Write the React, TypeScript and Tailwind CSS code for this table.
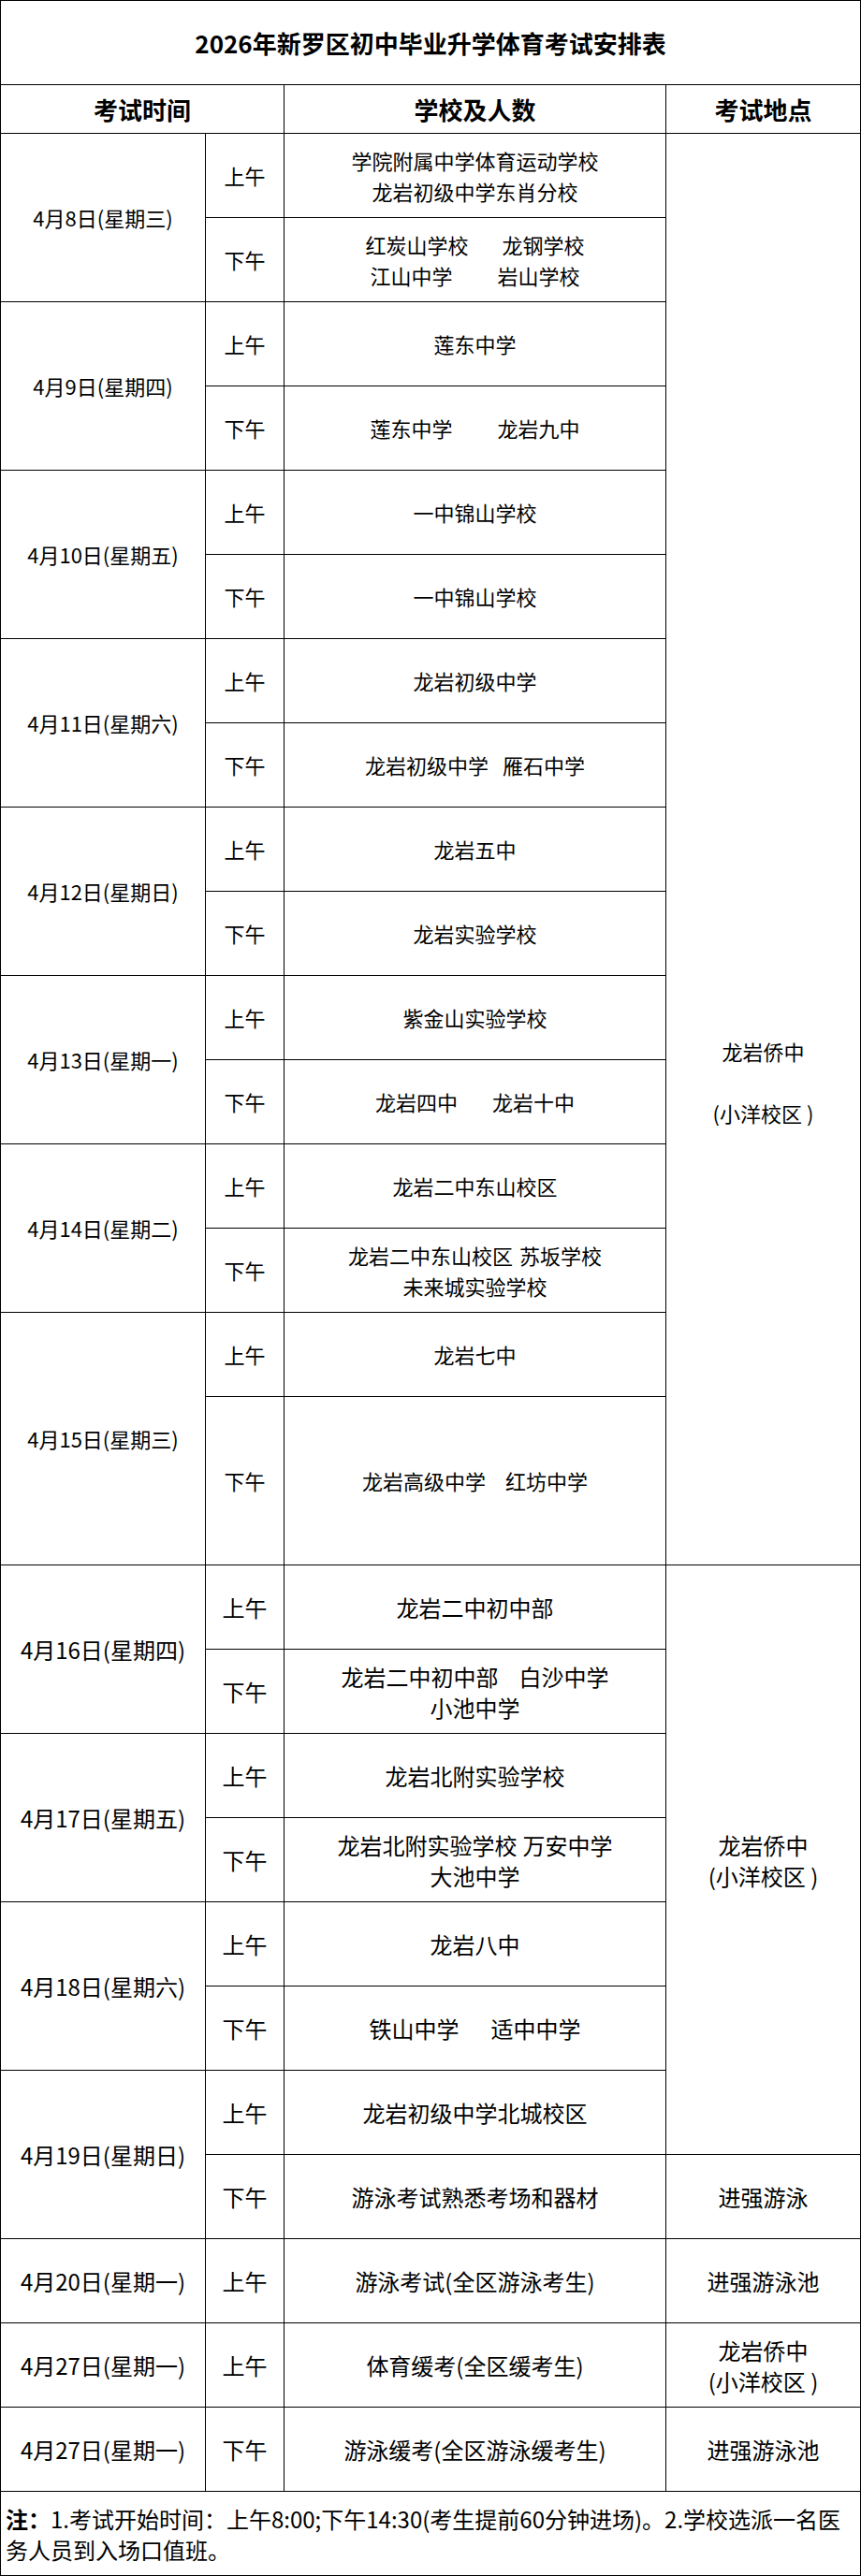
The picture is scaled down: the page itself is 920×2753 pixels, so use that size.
import React from "react";

type Line = { segs: string[]; gap?: string };
type Half = { period: string; lines: Line[] };
type Day = { date: string; am: Half; pm: Half };

const L = (segs: string[], gap = "gap-0"): Line => ({ segs, gap });

const upper: Day[] = [
  {
    date: "4月8日(星期三)",
    am: { period: "上午", lines: [L(["学院附属中学体育运动学校"]), L(["龙岩初级中学东肖分校"])] },
    pm: { period: "下午", lines: [L(["红炭山学校", "龙钢学校"], "gap-[36px]"), L(["江山中学", "岩山学校"], "gap-[48px]")] },
  },
  {
    date: "4月9日(星期四)",
    am: { period: "上午", lines: [L(["莲东中学"])] },
    pm: { period: "下午", lines: [L(["莲东中学", "龙岩九中"], "gap-[48px]")] },
  },
  {
    date: "4月10日(星期五)",
    am: { period: "上午", lines: [L(["一中锦山学校"])] },
    pm: { period: "下午", lines: [L(["一中锦山学校"])] },
  },
  {
    date: "4月11日(星期六)",
    am: { period: "上午", lines: [L(["龙岩初级中学"])] },
    pm: { period: "下午", lines: [L(["龙岩初级中学", "雁石中学"], "gap-[15px]")] },
  },
  {
    date: "4月12日(星期日)",
    am: { period: "上午", lines: [L(["龙岩五中"])] },
    pm: { period: "下午", lines: [L(["龙岩实验学校"])] },
  },
  {
    date: "4月13日(星期一)",
    am: { period: "上午", lines: [L(["紫金山实验学校"])] },
    pm: { period: "下午", lines: [L(["龙岩四中", "龙岩十中"], "gap-[37px]")] },
  },
  {
    date: "4月14日(星期二)",
    am: { period: "上午", lines: [L(["龙岩二中东山校区"])] },
    pm: { period: "下午", lines: [L(["龙岩二中东山校区", "苏坂学校"], "gap-[7px]"), L(["未来城实验学校"])] },
  },
  {
    date: "4月15日(星期三)",
    am: { period: "上午", lines: [L(["龙岩七中"])] },
    pm: { period: "下午", lines: [L(["龙岩高级中学", "红坊中学"], "gap-[21px]")] },
  },
];

const lower: Day[] = [
  {
    date: "4月16日(星期四)",
    am: { period: "上午", lines: [L(["龙岩二中初中部"])] },
    pm: { period: "下午", lines: [L(["龙岩二中初中部", "白沙中学"], "gap-[22px]"), L(["小池中学"])] },
  },
  {
    date: "4月17日(星期五)",
    am: { period: "上午", lines: [L(["龙岩北附实验学校"])] },
    pm: { period: "下午", lines: [L(["龙岩北附实验学校", "万安中学"], "gap-[6px]"), L(["大池中学"])] },
  },
  {
    date: "4月18日(星期六)",
    am: { period: "上午", lines: [L(["龙岩八中"])] },
    pm: { period: "下午", lines: [L(["铁山中学", "适中中学"], "gap-[34px]")] },
  },
];

const cell = "bg-white flex flex-col items-center justify-center text-center leading-[33px]";

function Lines({ lines }: { lines: Line[] }) {
  return (
    <>
      {lines.map((ln, i) => (
        <div key={i} className={`flex flex-row justify-center whitespace-nowrap ${ln.gap}`}>
          {ln.segs.map((s, j) => (
            <span key={j}>{s}</span>
          ))}
        </div>
      ))}
    </>
  );
}

function DayRows({ d, size }: { d: Day; size: string }) {
  return (
    <>
      <div className={`${cell} ${size} row-span-2`}>{d.date}</div>
      <div className={`${cell} ${size}`}>{d.am.period}</div>
      <div className={`${cell} ${size}`}>
        <Lines lines={d.am.lines} />
      </div>
      <div className={`${cell} ${size}`}>{d.pm.period}</div>
      <div className={`${cell} ${size}`}>
        <Lines lines={d.pm.lines} />
      </div>
    </>
  );
}

export default function App() {
  const s22 = "text-[22px]";
  const s24 = "text-[24px]";
  return (
    <div
      className="w-[920px] bg-white text-black"
      style={{ fontFamily: '"Noto Sans CJK SC", "Noto Sans", sans-serif' }}
    >
      <div className="grid w-[920px] grid-cols-[218px_83px_407px_207px] grid-rows-[89px_51px_repeat(15,89px)_179px_repeat(12,89px)] gap-px bg-black p-px">
        {/* Title */}
        <div className={`${cell} col-span-4 text-[26px] font-bold`}>
          2026年新罗区初中毕业升学体育考试安排表
        </div>
        {/* Header */}
        <div className={`${cell} col-span-2 text-[26px] font-bold`}>考试时间</div>
        <div className={`${cell} text-[26px] font-bold`}>学校及人数</div>
        <div className={`${cell} text-[26px] font-bold`}>考试地点</div>

        {/* 4/8 row with merged location */}
        <div className={`${cell} ${s22} row-span-2`}>{upper[0].date}</div>
        <div className={`${cell} ${s22}`}>{upper[0].am.period}</div>
        <div className={`${cell} ${s22}`}>
          <Lines lines={upper[0].am.lines} />
        </div>
        <div className="row-span-16 flex flex-col items-center justify-start bg-white pt-[964px] text-center text-[22px] leading-[33px]">
          <div>龙岩侨中</div>
          <div className="h-[33px]"></div>
          <div>(小洋校区 )</div>
        </div>
        <div className={`${cell} ${s22}`}>{upper[0].pm.period}</div>
        <div className={`${cell} ${s22}`}>
          <Lines lines={upper[0].pm.lines} />
        </div>

        {upper.slice(1).map((d, i) => (
          <DayRows key={i} d={d} size={s22} />
        ))}

        {/* 4/16 with second merged location */}
        <div className={`${cell} ${s24} row-span-2`}>{lower[0].date}</div>
        <div className={`${cell} ${s24}`}>{lower[0].am.period}</div>
        <div className={`${cell} ${s24}`}>
          <Lines lines={lower[0].am.lines} />
        </div>
        <div className={`${cell} ${s24} row-span-7`}>
          <div>龙岩侨中</div>
          <div>(小洋校区 )</div>
        </div>
        <div className={`${cell} ${s24}`}>{lower[0].pm.period}</div>
        <div className={`${cell} ${s24}`}>
          <Lines lines={lower[0].pm.lines} />
        </div>

        {lower.slice(1).map((d, i) => (
          <DayRows key={i} d={d} size={s24} />
        ))}

        {/* 4/19 */}
        <div className={`${cell} ${s24} row-span-2`}>4月19日(星期日)</div>
        <div className={`${cell} ${s24}`}>上午</div>
        <div className={`${cell} ${s24}`}>龙岩初级中学北城校区</div>
        <div className={`${cell} ${s24}`}>下午</div>
        <div className={`${cell} ${s24}`}>游泳考试熟悉考场和器材</div>
        <div className={`${cell} ${s24}`}>进强游泳</div>

        {/* 4/20 */}
        <div className={`${cell} ${s24}`}>4月20日(星期一)</div>
        <div className={`${cell} ${s24}`}>上午</div>
        <div className={`${cell} ${s24}`}>游泳考试(全区游泳考生)</div>
        <div className={`${cell} ${s24}`}>进强游泳池</div>

        {/* 4/27 AM */}
        <div className={`${cell} ${s24}`}>4月27日(星期一)</div>
        <div className={`${cell} ${s24}`}>上午</div>
        <div className={`${cell} ${s24}`}>体育缓考(全区缓考生)</div>
        <div className={`${cell} ${s24}`}>
          <div>龙岩侨中</div>
          <div>(小洋校区 )</div>
        </div>

        {/* 4/27 PM */}
        <div className={`${cell} ${s24}`}>4月27日(星期一)</div>
        <div className={`${cell} ${s24}`}>下午</div>
        <div className={`${cell} ${s24}`}>游泳缓考(全区游泳缓考生)</div>
        <div className={`${cell} ${s24}`}>进强游泳池</div>

        {/* Note */}
        <div className="col-span-4 flex flex-col justify-center bg-white px-[5px] text-left text-[24px] leading-[33px]">
          <div className="whitespace-nowrap">
            <span className="font-bold">注：</span>
            <span>1.考试开始时间：上午8:00;下午14:30(考生提前60分钟进场)。2.学校选派一名医</span>
          </div>
          <div className="whitespace-nowrap">务人员到入场口值班。</div>
        </div>
      </div>
    </div>
  );
}
